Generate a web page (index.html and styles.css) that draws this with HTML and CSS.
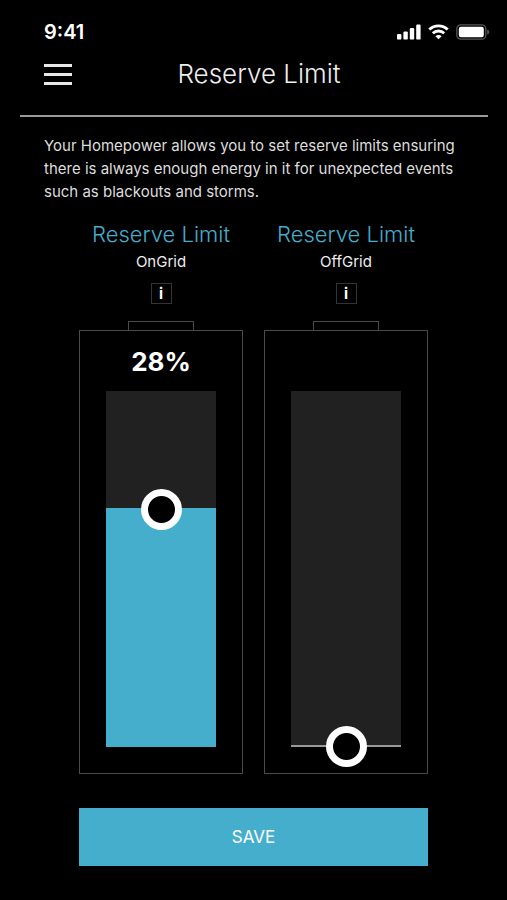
FILE: index.html
```
<!DOCTYPE html>
<html lang="en">
<head>
    <meta charset="UTF-8">
    <meta name="viewport" content="width=device-width, initial-scale=1.0">
    <title>Reserve Limit</title>
    <link rel="stylesheet" href="styles.css">
</head>
<body>
    <div class="status-bar">
        <span class="time">9:41</span>
        <div class="status-icons">
            <svg width="24" height="16" viewBox="0 0 24 16" fill="#fff" aria-hidden="true">
                <rect x="0" y="10" width="4.4" height="5.6" rx="1.2"/>
                <rect x="6.4" y="7.4" width="4.4" height="8.2" rx="1.2"/>
                <rect x="12.8" y="4" width="4.4" height="11.6" rx="1.2"/>
                <rect x="19.2" y="0.5" width="4.4" height="15.1" rx="1.2"/>
            </svg>
            <svg width="21" height="16" viewBox="0 0 21 16" fill="none" stroke="#fff" stroke-width="2.8" aria-hidden="true">
                <path d="M1.3 5.6C6.4 0.6 14.6 0.6 19.7 5.6"/>
                <path d="M4.8 9.3C8 6.2 13 6.2 16.2 9.3"/>
                <path d="M10.5 15.3L7.4 12.2C9.2 10.6 11.8 10.6 13.6 12.2Z" fill="#fff" stroke="none"/>
            </svg>
            <svg width="34" height="16" viewBox="0 0 34 16" aria-hidden="true">
                <rect x="0.8" y="0.8" width="29" height="14.4" rx="4" fill="none" stroke="#555" stroke-width="1.3"/>
                <rect x="2.8" y="2.8" width="25" height="10.4" rx="2.2" fill="#fff"/>
                <path d="M31.2 5.4C33.9 6.4 33.9 9.6 31.2 10.6Z" fill="#555"/>
            </svg>
        </div>
    </div>

    <header class="header">
        <button class="menu" type="button" aria-label="Menu">
            <span></span>
            <span></span>
            <span></span>
        </button>
        <h1>Reserve Limit</h1>
    </header>

    <main>
        <p class="intro">Your Homepower allows you to set reserve limits ensuring there is always enough energy in it for unexpected events such as blackouts and storms.</p>

        <form class="limits">
            <section class="limit">
                <h2>Reserve Limit</h2>
                <label for="ongrid">OnGrid</label>
                <button class="info" type="button" aria-label="About OnGrid">i</button>
                <div class="cap"></div>
                <div class="battery">
                    <output for="ongrid">28%</output>
                    <div class="level" style="--fill: 67%">
                        <input type="range" id="ongrid" min="0" max="42" value="28">
                    </div>
                </div>
            </section>

            <section class="limit">
                <h2>Reserve Limit</h2>
                <label for="offgrid">OffGrid</label>
                <button class="info" type="button" aria-label="About OffGrid">i</button>
                <div class="cap"></div>
                <div class="battery">
                    <output for="offgrid"></output>
                    <div class="level empty" style="--fill: 0%">
                        <input type="range" id="offgrid" min="0" max="42" value="0">
                    </div>
                </div>
            </section>

            <button class="save" type="submit">SAVE</button>
        </form>
    </main>
</body>
</html>
```
FILE: styles.css
```
* {
    box-sizing: border-box;
}
body {
    margin: 0;
    background: #000;
    color: #fff;
    font-family: Inter, "Liberation Sans", sans-serif;
}
button {
    font-family: inherit;
    color: inherit;
    cursor: pointer;
}
.status-bar {
    display: flex;
    justify-content: space-between;
    align-items: center;
    padding: 20px 17px 0 44px;
}
.time {
    font-size: 20px;
    font-weight: 600;
    line-height: 24px;
}
.status-icons {
    display: flex;
    gap: 7px;
}
.header {
    display: grid;
    grid-template-columns: 28px 1fr 18px;
    align-items: center;
    margin: 0 19px 0 20px;
    padding: 13px 24px 24px;
    border-bottom: 2px solid #9a9a9a;
}
.menu {
    display: flex;
    flex-direction: column;
    gap: 6px;
    padding: 0;
    border: 0;
    background: none;
}
.menu span {
    width: 28px;
    height: 3px;
    background: #e8e8e8;
}
h1 {
    margin: 0;
    font-size: 26px;
    font-weight: 300;
    line-height: 34px;
    text-align: center;
    color: #eee;
}
.intro {
    margin: 17px 44px 0;
    font-size: 15px;
    line-height: 23px;
    color: #ddd;
}
.limits {
    display: grid;
    grid-template-columns: 1fr 1fr;
    column-gap: 21px;
    row-gap: 34px;
    padding: 17px 79px 34px;
}
.limit {
    display: flex;
    flex-direction: column;
    align-items: center;
}
h2 {
    margin: 0;
    font-size: 22px;
    font-weight: 300;
    line-height: 28px;
    white-space: nowrap;
    color: #46aecd;
}
.limit label {
    margin-top: 4px;
    font-size: 15px;
    line-height: 20px;
    color: #eee;
}
.info {
    width: 21px;
    height: 21px;
    margin: 11px 0 17px;
    padding: 0;
    border: 1px solid #333;
    background: none;
    font-size: 15px;
    font-weight: 700;
    line-height: 18px;
}
.cap {
    width: 66px;
    height: 9px;
    border: 1px solid #4a4a4a;
    border-bottom: 0;
}
.battery {
    width: 100%;
    padding: 15px 26px 26px;
    border: 1px solid #4a4a4a;
}
.battery output {
    display: block;
    height: 32px;
    margin-bottom: 13px;
    font-size: 26px;
    font-weight: 700;
    line-height: 32px;
    text-align: center;
}
.level {
    height: 356px;
    background: linear-gradient(to top, #46aecd var(--fill), #212121 var(--fill));
}
.level.empty {
    border-bottom: 2px solid #999;
}
/* the thumb hangs half its height over each end of the level */
.level input {
    display: block;
    position: relative;
    top: -20px;
    width: 100%;
    height: 396px;
    margin: 0;
    -webkit-appearance: none;
    appearance: none;
    writing-mode: vertical-lr;
    direction: rtl;
    background: none;
}
.level input::-webkit-slider-thumb {
    -webkit-appearance: none;
    width: 41px;
    height: 41px;
    border: 7px solid #fff;
    border-radius: 50%;
    background: #000;
}
.save {
    grid-column: 1 / -1;
    height: 58px;
    border: 0;
    background: #46aecd;
    font-size: 17px;
}
```
